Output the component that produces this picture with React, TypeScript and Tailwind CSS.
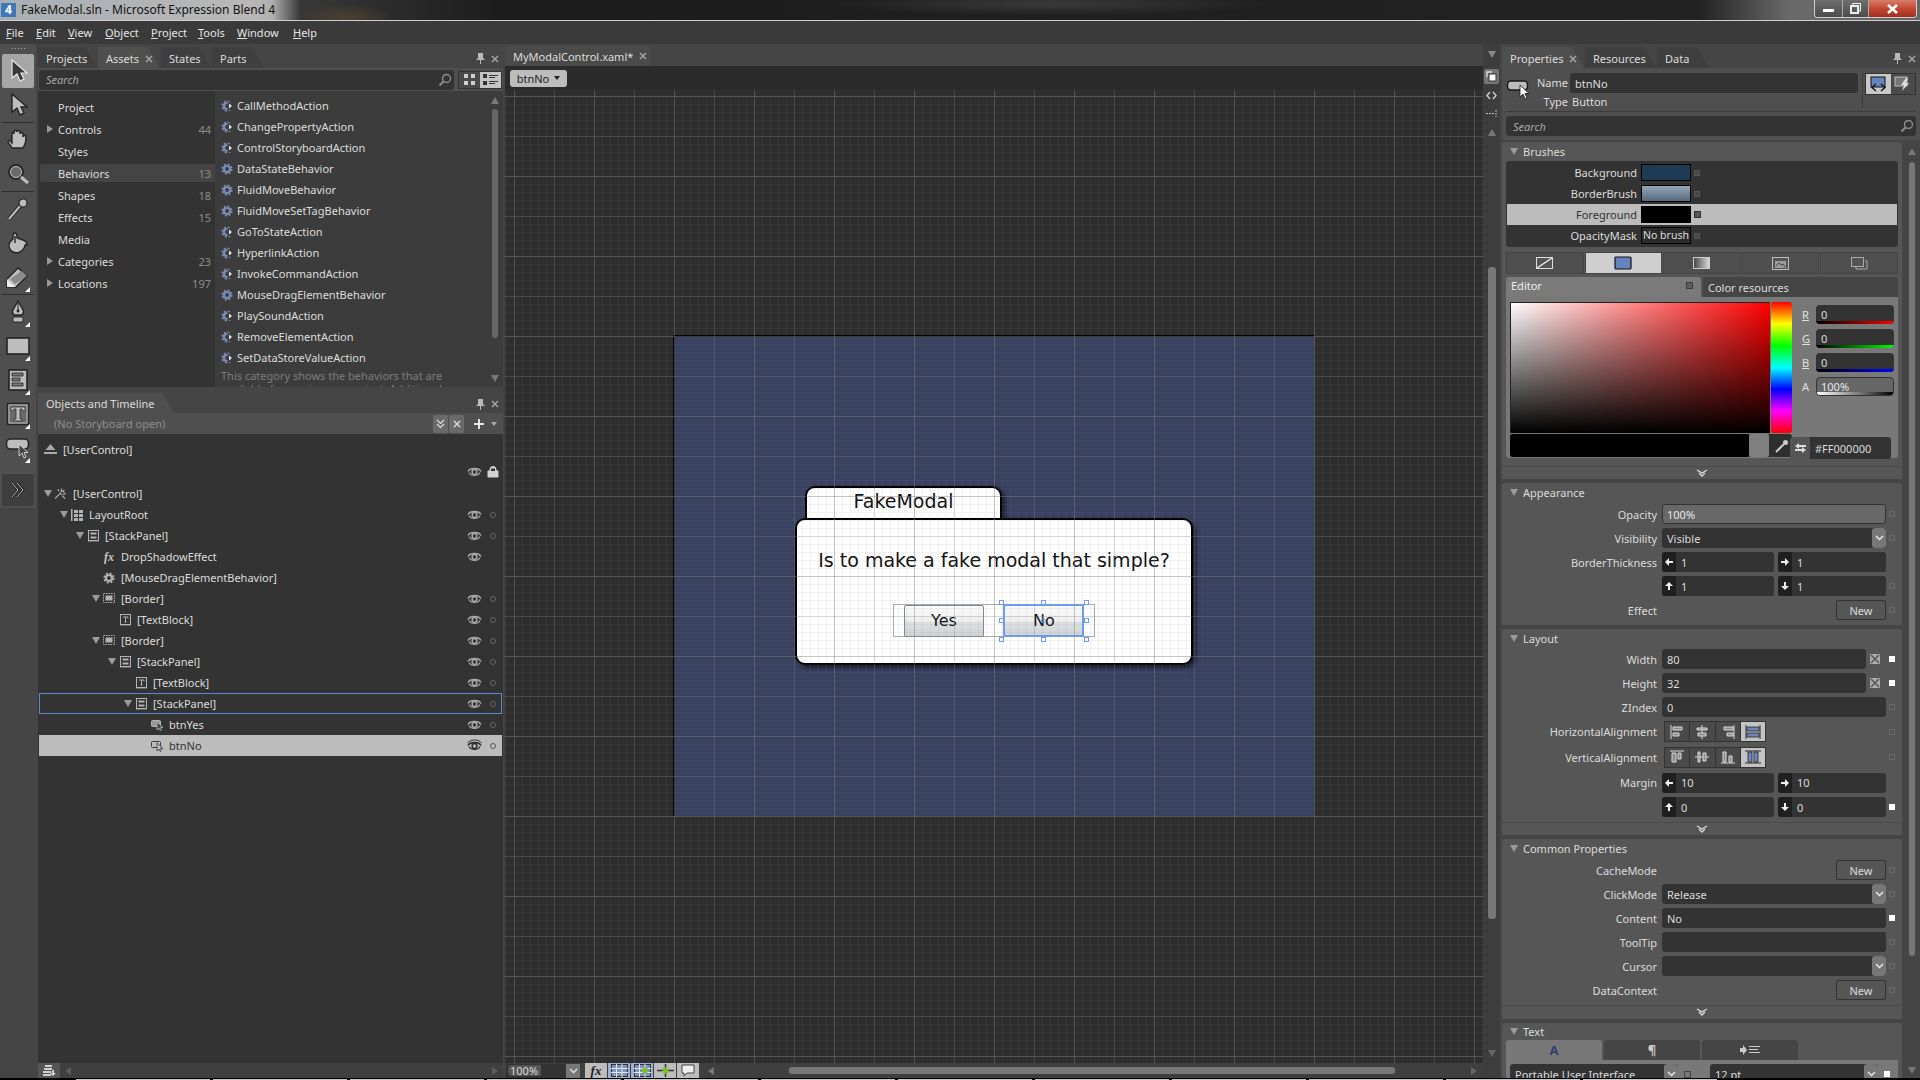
import type { ReactNode } from "react"

const menus: [string, string][] = [
  ["File", "w-[30px]"],
  ["Edit", "w-[32px]"],
  ["View", "w-[37px]"],
  ["Object", "w-[46px]"],
  ["Project", "w-[47px]"],
  ["Tools", "w-[39px]"],
  ["Window", "w-[56px]"],
  ["Help", "w-[40px]"],
]

const categories = [
  { name: "Project" },
  { name: "Controls", count: "44", arrow: true },
  { name: "Styles" },
  { name: "Behaviors", count: "13", active: true },
  { name: "Shapes", count: "18" },
  { name: "Effects", count: "15" },
  { name: "Media" },
  { name: "Categories", count: "23", arrow: true },
  { name: "Locations", count: "197", arrow: true },
]

const assets: [string, boolean][] = [
  ["CallMethodAction", true],
  ["ChangePropertyAction", true],
  ["ControlStoryboardAction", true],
  ["DataStateBehavior", false],
  ["FluidMoveBehavior", false],
  ["FluidMoveSetTagBehavior", false],
  ["GoToStateAction", true],
  ["HyperlinkAction", true],
  ["InvokeCommandAction", true],
  ["MouseDragElementBehavior", false],
  ["PlaySoundAction", true],
  ["RemoveElementAction", true],
  ["SetDataStoreValueAction", true],
]

type TreeIcon = "wand" | "grid" | "stack" | "fx" | "gear" | "border" | "text" | "button"

const tree: { depth: number; arrow?: boolean; icon: TreeIcon; label: string; eye?: boolean; dot?: boolean; outline?: boolean; selected?: boolean }[] = [
  { depth: 0, arrow: true, icon: "wand", label: "[UserControl]" },
  { depth: 1, arrow: true, icon: "grid", label: "LayoutRoot", eye: true, dot: true },
  { depth: 2, arrow: true, icon: "stack", label: "[StackPanel]", eye: true, dot: true },
  { depth: 3, icon: "fx", label: "DropShadowEffect", eye: true },
  { depth: 3, icon: "gear", label: "[MouseDragElementBehavior]" },
  { depth: 3, arrow: true, icon: "border", label: "[Border]", eye: true, dot: true },
  { depth: 4, icon: "text", label: "[TextBlock]", eye: true, dot: true },
  { depth: 3, arrow: true, icon: "border", label: "[Border]", eye: true, dot: true },
  { depth: 4, arrow: true, icon: "stack", label: "[StackPanel]", eye: true, dot: true },
  { depth: 5, icon: "text", label: "[TextBlock]", eye: true, dot: true },
  { depth: 5, arrow: true, icon: "stack", label: "[StackPanel]", eye: true, dot: true, outline: true },
  { depth: 6, icon: "button", label: "btnYes", eye: true, dot: true },
  { depth: 6, icon: "button", label: "btnNo", eye: true, dot: true, selected: true },
]

function DownArrow({ className = "border-t-[#9a9a9a]" }: { className?: string }) {
  return <span className={`block h-0 w-0 border-x-[4px] border-t-[7px] border-x-transparent ${className}`} />
}

function RightArrow() {
  return <span className="block h-0 w-0 border-y-[4px] border-l-[6px] border-y-transparent border-l-[#999]" />
}

function Close({ color = "#a8a8a8" }: { color?: string }) {
  return (
    <svg width="8" height="8" viewBox="0 0 8 8" className="shrink-0">
      <path d="M1 1l6 6M7 1L1 7" stroke={color} strokeWidth="1.4" />
    </svg>
  )
}

function Pin() {
  return (
    <svg width="9" height="11" viewBox="0 0 9 11" className="shrink-0">
      <path d="M2 0h5v5l2 2H0l2-2zM4 7h1v4H4z" fill="#b8b8b8" />
    </svg>
  )
}

function PinClose() {
  return (
    <div className="ml-auto flex items-center gap-[6px] pr-[4px] pt-[2px]">
      <Pin />
      <Close />
    </div>
  )
}

function Magnifier() {
  return (
    <svg width="14" height="14" viewBox="0 0 14 14" className="shrink-0">
      <circle cx="8.5" cy="5.5" r="4" fill="none" stroke="#8d8d8d" strokeWidth="1.4" />
      <path d="M5.5 8.5L1.5 12.5" stroke="#8d8d8d" strokeWidth="2" />
    </svg>
  )
}

function Eye({ strong = false }: { strong?: boolean }) {
  const c = strong ? "#2c2c2c" : "#a8a8a8"
  return (
    <svg width="15" height="13" viewBox="0 0 15 13" className="shrink-0">
      <path d="M1 6.5C3 2.5 12 2.5 14 6.5" fill="none" stroke={c} strokeWidth="1.6" />
      <path d="M2 7.5C4 11.5 11 11.5 13 7.5" fill="none" stroke={c} strokeWidth="1.2" />
      <circle cx="7.5" cy="7" r="2.4" fill="none" stroke={c} strokeWidth="1.5" />
      {strong && <path d="M0.5 4C3 0 12 0 14.5 4" fill="none" stroke={c} strokeWidth="1" />}
    </svg>
  )
}

function Gear({ action, color = "#7d8db8" }: { action: boolean; color?: string }) {
  return (
    <svg width="12" height="12" viewBox="0 0 12 12" className="shrink-0">
      <circle cx="6" cy="6" r="3" fill="none" stroke={color} strokeWidth="2.2" />
      <circle cx="6" cy="6" r="4.8" fill="none" stroke={color} strokeWidth="1.6" strokeDasharray="2 1.77" />
      {action && <rect x="6.5" y="2" width="5.5" height="8" fill="#3c3c3c" />}
      {action && <path d="M8 3.5l3 2.5-3 2.5z" fill="#e4e4e4" />}
    </svg>
  )
}

function TreeGlyph({ icon, dark }: { icon: TreeIcon; dark?: boolean }) {
  const c = dark ? "#3a3a3a" : "#b4b4b4"
  if (icon === "wand")
    return (
      <svg width="13" height="12" viewBox="0 0 13 12">
        <path d="M0 11l6-6M3 1l1.500 2M7 0v3M10 1.500L8.500 3.500M10 6H12M8 8l3 3" fill="none" stroke={c} strokeWidth="1.3" />
        <circle cx="8" cy="5" r="2" fill="none" stroke={c} />
      </svg>
    )
  if (icon === "grid")
    return (
      <svg width="12" height="12" viewBox="0 0 12 12" fill={c}>
        <path d="M0 0h1.5v12H0zM3 1h4v3H3zM8 1h4v3H8zM3 5h4v3H3zM8 5h4v3H8zM3 9h4v3H3zM8 9h4v3H8z" />
      </svg>
    )
  if (icon === "stack")
    return (
      <svg width="11" height="12" viewBox="0 0 11 12">
        <rect x="0.5" y="0.5" width="10" height="10" fill="none" stroke={c} />
        <rect x="2.5" y="2.5" width="6" height="2" fill={c} />
        <rect x="2.5" y="6.5" width="6" height="2" fill={c} />
        <rect x="0" y="11" width="11" height="1" fill="#666" />
      </svg>
    )
  if (icon === "fx")
    return (
      <span className="font-['Liberation_Serif',serif] text-[12px] font-bold italic leading-none text-[#c8c8c8]">fx</span>
    )
  if (icon === "gear") return <Gear action={false} color="#b4b4b4" />
  if (icon === "border")
    return (
      <svg width="12" height="11" viewBox="0 0 12 11">
        <rect x="0.5" y="0.5" width="11" height="9" fill="none" stroke={c} strokeDasharray="1.5 1" />
        <rect x="2.5" y="2.5" width="7" height="5" fill={c} />
      </svg>
    )
  if (icon === "text")
    return (
      <svg width="11" height="12" viewBox="0 0 11 12">
        <rect x="0.5" y="0.5" width="10" height="10" fill="none" stroke={c} />
        <path d="M3 3h5v1.4M5.5 3v5M4.5 8h2" fill="none" stroke={c} />
        <rect x="0" y="11" width="11" height="1" fill="#666" />
      </svg>
    )
  return (
    <svg width="12" height="12" viewBox="0 0 12 12">
      <rect x="0.5" y="1.5" width="9" height="6" rx="1" fill={dark ? "none" : "#999"} stroke={c} />
      <path d="M6 3v8l2-2 1.2 2.5 1.2-.6L9.4 8.4H12z" fill={dark ? "#c0c0c0" : "#444"} stroke={c} strokeWidth="0.8" />
    </svg>
  )
}

function ToolCorner() {
  return <span className="absolute bottom-[2px] right-[4px] h-0 w-0 border-b-[5px] border-l-[5px] border-b-white border-l-transparent" />
}

function Tool({ children, active, corner }: { children: ReactNode; active?: boolean; corner?: boolean }) {
  return (
    <div className={`relative mx-[2px] flex h-[34px] w-[32px] items-center justify-center rounded-[2px] ${active ? "bg-[#a6a6a6]" : ""}`}>
      {children}
      {corner && <ToolCorner />}
    </div>
  )
}

function Sep() {
  return <div className="mx-[2px] h-px w-[32px] shrink-0 bg-[#2e2e2e]" />
}

function Toolbar() {
  const s = "#242424"
  const f = "#bdbdbd"
  return (
    <div className="flex h-[464px] w-[36px] shrink-0 flex-col rounded-tr-[2px] bg-[#4f4f4f] pt-[2px]">
      <div className="mb-[3px] flex h-[5px] justify-center gap-[2px] pt-[2px]">
        {[0, 1, 2, 3, 4].map((n) => (
          <span key={n} className="h-px w-px bg-[#aaa]" />
        ))}
      </div>
      <Tool active>
        <svg width="22" height="26" viewBox="0 0 22 26">
          <path d="M5 2v18l5-4 3 7 4-2-3-6h6z" fill="#3a3a3a" stroke="#e8e8e8" strokeWidth="1.2" />
        </svg>
      </Tool>
      <Tool>
        <svg width="22" height="26" viewBox="0 0 22 26">
          <path d="M5 2v18l5-4 3 7 4-2-3-6h6z" fill={f} stroke={s} strokeWidth="1.4" />
        </svg>
      </Tool>
      <Sep />
      <Tool>
        <svg width="24" height="24" viewBox="0 0 24 24">
          <path d="M6 20c-2-3-4-5-4-7 1-1 2-1 3 1l1 1V6c0-2 2-2 2 0V4c0-2 3-2 3 0v0c0-2 3-2 3 0v2c0-2 3-2 3 0v3c0-2 3-2 3 0 0 4-1 8-3 11z" fill={f} stroke={s} strokeWidth="1.4" />
        </svg>
      </Tool>
      <Tool>
        <svg width="24" height="24" viewBox="0 0 24 24">
          <circle cx="10" cy="10" r="7" fill="#6a6a6a" stroke={s} strokeWidth="1.8" />
          <circle cx="10" cy="10" r="5.5" fill="none" stroke={f} strokeWidth="1" />
          <path d="M15 15l7 6" stroke={f} strokeWidth="3" />
        </svg>
      </Tool>
      <Sep />
      <Tool>
        <svg width="24" height="24" viewBox="0 0 24 24">
          <path d="M3 22l11-13" stroke={s} strokeWidth="4" />
          <path d="M3 22l11-13" stroke={f} strokeWidth="2" />
          <circle cx="17" cy="6" r="4" fill={f} stroke={s} strokeWidth="1.2" />
        </svg>
      </Tool>
      <Tool>
        <svg width="24" height="24" viewBox="0 0 24 24">
          <path d="M9 2c2 0 2 2 2 5l6 2c3 1 4 3 4 5-3-1-2 2-3 3-2 4-7 6-11 4-4-2-5-7-3-10l3-3V5c0-2 1-3 2-3z" fill={f} stroke={s} strokeWidth="1.4" />
          <path d="M9 5v7" stroke={s} strokeWidth="1.4" />
        </svg>
      </Tool>
      <Tool corner>
        <svg width="26" height="24" viewBox="0 0 26 24">
          <path d="M2 22v-8l11-11 9 8-11 11z" fill={f} stroke={s} strokeWidth="1.5" />
          <path d="M2 22v-8l5 5 4 3z" fill="#eee" />
          <path d="M5 14l5 5 12-8-5-5z" fill="#8a8a8a" />
        </svg>
      </Tool>
      <Sep />
      <Tool corner>
        <svg width="20" height="24" viewBox="0 0 20 24">
          <path d="M10 1l5 9c1 2 0 4-1 5H6c-1-1-2-3-1-5z" fill={f} stroke={s} strokeWidth="1.4" />
          <path d="M10 3v7" stroke={s} />
          <circle cx="10" cy="11" r="1.4" fill={s} />
          <rect x="5" y="17" width="10" height="5" rx="1" fill={f} stroke={s} />
        </svg>
      </Tool>
      <Tool corner>
        <svg width="26" height="22" viewBox="0 0 26 22">
          <rect x="2" y="3" width="22" height="16" fill={f} stroke={s} strokeWidth="1.6" />
        </svg>
      </Tool>
      <Tool corner>
        <svg width="22" height="24" viewBox="0 0 22 24">
          <rect x="2" y="2" width="18" height="20" fill={f} stroke={s} strokeWidth="1.6" />
          <path d="M5 5h11v3H5zM5 10h8v3H5zM5 15h11v3H5z" fill="#777" stroke={s} strokeWidth="0.8" />
        </svg>
      </Tool>
      <Tool corner>
        <svg width="24" height="24" viewBox="0 0 24 24">
          <rect x="1.5" y="1.5" width="21" height="21" fill="#6a6a6a" stroke={s} strokeWidth="1.4" />
          <rect x="3" y="3" width="18" height="18" fill="none" stroke={f} />
          <path d="M5 5h14v4h-2l-1-2h-2v10h2v2H8v-2h2V7H8L7 9H5z" fill={f} stroke={s} strokeWidth="0.7" />
        </svg>
      </Tool>
      <Tool corner>
        <svg width="26" height="24" viewBox="0 0 26 24">
          <rect x="1.5" y="3" width="22" height="10" rx="4" fill={f} stroke={s} strokeWidth="1.6" />
          <path d="M14 8v12l3-3 2 5 2-1-2-4.500h4z" fill="#444" stroke="#e8e8e8" strokeWidth="0.8" />
        </svg>
      </Tool>
      <div className="mx-[2px] mt-[9px] flex h-[32px] w-[32px] items-center justify-center rounded-[2px] bg-[#3e3e3e]">
        <svg width="16" height="16" viewBox="0 0 16 16">
          <path d="M2 1l6 7-6 7M7 1l6 7-6 7" fill="none" stroke="#181818" strokeWidth="2.4" />
          <path d="M2 1l6 7-6 7M7 1l6 7-6 7" fill="none" stroke="#c8c8c8" strokeWidth="1" />
        </svg>
      </div>
    </div>
  )
}

function Tab({ label, active, close, width, flat }: { label: string; active?: boolean; close?: boolean; width: string; flat?: boolean }) {
  return (
    <div
      className={`flex h-full items-center gap-[6px] pl-[8px] text-[#dcdcdc] [clip-path:polygon(0_0,calc(100%-12px)_0,100%_100%,0_100%)] ${flat ? "" : "pt-[2px]"} ${width} ${active ? "bg-[#4f4f4f]" : "bg-[#3f3f3f]"}`}
    >
      {label}
      {close && <Close />}
    </div>
  )
}

function SearchBox({ className }: { className: string }) {
  return (
    <div className={`flex h-[20px] items-center rounded-[3px] bg-[#333] pl-[7px] pr-[2px] italic text-[#a8a8a8] ${className}`}>
      Search
      <span className="ml-auto">
        <Magnifier />
      </span>
    </div>
  )
}

function LeftPanels() {
  return (
    <div className="flex w-[465px] shrink-0 flex-col pt-[3px]">
      <div className="flex h-[21px] items-stretch gap-px">
        <Tab label="Projects" width="w-[59px]" />
        <Tab label="Assets" active close width="w-[62px]" />
        <Tab label="States" width="w-[50px]" />
        <Tab label="Parts" width="w-[52px]" />
        <PinClose />
      </div>
      <div className="flex h-[23px] items-center gap-[4px] bg-[#4f4f4f] px-[1px]">
        <SearchBox className="w-[415px]" />
        <div className="flex h-[18px] w-[44px] border border-[#333]">
          <div className="flex flex-1 items-center justify-center bg-[#4a4a4a]">
            <svg width="11" height="11" viewBox="0 0 11 11" fill="#cfcfcf">
              <path d="M0 0h4v4H0zM7 0h4v4H7zM0 7h4v4H0zM7 7h4v4H7z" />
            </svg>
          </div>
          <div className="flex flex-1 items-center justify-center bg-[#c4c4c4]">
            <svg width="15" height="11" viewBox="0 0 15 11" fill="#333">
              <path d="M0 0h4v4H0zM6 1h9v1H6zM6 3h6v1H6zM0 7h4v4H0zM6 7h9v1H6zM6 9h6v1H6z" />
            </svg>
          </div>
        </div>
      </div>
      <div className="flex h-[296px] overflow-hidden">
        <div className="w-[177px] shrink-0 bg-[#333] pl-[2px] pt-[5px]">
          {categories.map((c) => (
            <div key={c.name} className="flex h-[22px] items-center">
              <div className={`flex h-[18px] w-full items-center rounded-l-[2px] pl-[7px] ${c.active ? "bg-[#444]" : ""}`}>
                <span className="w-[11px]">{c.arrow && <RightArrow />}</span>
                <span className="text-[#dcdcdc]">{c.name}</span>
                <span className="ml-auto pr-[4px] text-[#8e8e8e]">{c.count}</span>
              </div>
            </div>
          ))}
        </div>
        <div className="flex-1 bg-[#3c3c3c] pt-[4px]">
          {assets.map(([name, action]) => (
            <div key={name} className="flex h-[21px] items-center gap-[4px] pl-[6px] text-[#dcdcdc]">
              <Gear action={action} />
              {name}
            </div>
          ))}
          <div className="mt-[1px] pl-[6px] leading-[13px] text-[#7c7c7c]">
            This category shows the behaviors that are
            <br />
            available for use in your project. Additional
          </div>
        </div>
        <div className="flex w-[16px] shrink-0 flex-col items-center bg-[#3c3c3c] pt-[6px]">
          <span className="h-0 w-0 border-x-[4px] border-b-[7px] border-x-transparent border-b-[#7a7a7a]" />
          <div className="mt-[5px] h-[229px] w-[6px] shrink-0 rounded-[3px] bg-[#666]" />
          <span className="mt-[37px] h-0 w-0 border-x-[4px] border-t-[7px] border-x-transparent border-t-[#7a7a7a]" />
        </div>
      </div>
      <div className="h-[6px] shrink-0" />
      <div className="flex h-[20px] items-stretch">
        <Tab label="Objects and Timeline" width="w-[136px]" active flat />
        <PinClose />
      </div>
      <div className="flex h-[21px] items-center bg-[#4f4f4f] pl-[16px] pr-[6px]">
        <span className="text-[#8e8e8e]">(No Storyboard open)</span>
        <div className="ml-auto mr-[10px] flex h-[18px] gap-px">
          <div className="flex w-[15px] items-center justify-center rounded-[2px] bg-[#6a6a6a]">
            <svg width="9" height="10" viewBox="0 0 9 10">
              <path d="M1 1l3.500 3.500L8 1M1 5l3.500 3.500L8 5" fill="none" stroke="#e0e0e0" strokeWidth="1.2" />
            </svg>
          </div>
          <div className="flex w-[15px] items-center justify-center rounded-[2px] bg-[#6a6a6a]">
            <Close color="#e0e0e0" />
          </div>
        </div>
        <svg width="10" height="10" viewBox="0 0 10 10">
          <path d="M4 0h2v4h4v2H6v4H4V6H0V4h4z" fill="#e4e4e4" />
        </svg>
        <span className="ml-[7px]">
          <svg width="6" height="4" viewBox="0 0 6 4">
            <path d="M0 0h6L3 4z" fill="#aaa" />
          </svg>
        </span>
      </div>
      <div className="h-[629px] bg-[#333] pl-[1px] pr-[1px] pt-[5px]">
        <div className="flex h-[21px] items-center pl-[5px] text-[#dcdcdc]">
          <svg width="13" height="11" viewBox="0 0 13 11" className="mr-[6px]">
            <path d="M6.500 0l5 6h-10zM0 8h13v2H0z" fill="#aaa" />
          </svg>
          [UserControl]
        </div>
        <div className="flex h-[23px] items-center justify-end pr-[3px]">
          <Eye />
          <svg width="12" height="12" viewBox="0 0 12 12" className="ml-[5px]">
            <path d="M3 5V3.500a3 3 0 016 0V5M1 5h10v6H1z" fill="#d4d4d4" stroke="#d4d4d4" />
            <rect x="4" y="2.500" width="4" height="2.500" fill="#333" />
          </svg>
        </div>
        {tree.map((r, i) => (
          <div
            key={i}
            className={`flex h-[21px] items-center border ${r.outline ? "border-[#5f86d0]" : "border-transparent"} ${r.selected ? "bg-[#bcbcbc] text-[#333]" : "text-[#dcdcdc]"}`}
            style={{ paddingLeft: 4 + r.depth * 16 }}
          >
            <span className="mr-[3px] w-[8px]">{r.arrow && <DownArrow />}</span>
            <span className="mr-[6px] flex w-[12px] justify-center">
              <TreeGlyph icon={r.icon} dark={r.selected} />
            </span>
            {r.label}
            <span className="ml-auto mr-[7px] flex w-[15px]">{r.eye && <Eye strong={r.selected} />}</span>
            <span className="mr-[5px] flex w-[7px] justify-center">
              {r.dot && <span className={`h-[6px] w-[6px] rounded-full border ${r.selected ? "border-[#555]" : "border-[#666]"}`} />}
            </span>
          </div>
        ))}
      </div>
      <div className="flex h-[15px] items-center bg-[#3f3f3f] pr-[5px]">
        <div className="flex h-[15px] w-[22px] items-center justify-center bg-[#555]">
          <svg width="14" height="11" viewBox="0 0 14 11" fill="#d0d0d0">
            <path d="M3 0h7v2H3zM2 3h8v2H2zM1 6h8v2H1zM1 9h8v2H1zM10 5h2v3h2l-3 3-3-3h2z" />
          </svg>
        </div>
        <span className="ml-[5px] h-0 w-0 border-y-[4px] border-r-[6px] border-y-transparent border-r-[#5e5e5e]" />
        <span className="ml-auto h-0 w-0 border-y-[4px] border-l-[6px] border-y-transparent border-l-[#5e5e5e]" />
      </div>
    </div>
  )
}

function GridOverlay() {
  return (
    <div className="pointer-events-none absolute inset-0 [background-image:linear-gradient(90deg,rgba(128,128,128,.2)_1px,transparent_1px),linear-gradient(rgba(128,128,128,.2)_1px,transparent_1px),linear-gradient(90deg,rgba(128,128,128,.24)_1px,transparent_1px),linear-gradient(rgba(128,128,128,.24)_1px,transparent_1px),linear-gradient(90deg,rgba(128,128,128,.1)_1px,transparent_1px),linear-gradient(rgba(128,128,128,.1)_1px,transparent_1px)] [background-position:9px_6px,9px_6px,9px_6px,9px_6px,1px_6px,1px_6px] [background-size:80px_80px,80px_80px,40px_40px,40px_40px,8px_8px,8px_8px]" />
  )
}

function Handle({ className }: { className: string }) {
  return <span className={`absolute h-[5px] w-[5px] border border-[#6f9bef] bg-white/20 ${className}`} />
}

function ModalButton({ label }: { label: string }) {
  return (
    <div className="flex h-[32px] w-[80px] items-center justify-center rounded-[2px] border border-[#7d8a96] bg-[linear-gradient(#fbfbfb,#f0f0f0_50%,#dde0e2_55%,#cfd3d6)] font-['DejaVu_Sans',sans-serif] text-[16px] text-[#111]">
      {label}
    </div>
  )
}

function Center() {
  return (
    <div className="flex w-[978px] shrink-0 flex-col pt-[2px]">
      <div className="flex h-[20px] items-stretch">
        <div className="flex w-[146px] items-center gap-[6px] rounded-t-[3px] bg-[#4a4a4a] pl-[8px] text-[#dcdcdc]">
          MyModalControl.xaml*
          <Close />
        </div>
      </div>
      <div className="flex h-[24px] items-center bg-[#2b2b2b] pl-[5px]">
        <div className="flex h-[17px] w-[57px] items-center justify-center gap-[5px] rounded-[3px] bg-[#bdbdbd] text-[#222]">
          btnNo
          <svg width="6" height="4" viewBox="0 0 6 4">
            <path d="M0 0h6L3 4z" fill="#222" />
          </svg>
        </div>
      </div>
      <div className="relative h-[973px] overflow-hidden bg-[#2e2e2e]">
        <div className="absolute left-[168px] top-[245px] box-border h-[481px] w-[641px] border-l-2 border-t-2 border-black bg-[#3a4261]">
          <div className="absolute left-[130px] top-[149px] flex h-[34px] w-[197px] items-center justify-center rounded-t-[10px] border-2 border-b-0 border-black bg-white pb-[6px] font-['DejaVu_Sans',sans-serif] text-[19px] text-[#111] shadow-[3px_2px_4px_rgba(0,0,0,.55)]">
            FakeModal
          </div>
          <div className="absolute left-[120px] top-[181px] box-border flex h-[147px] w-[398px] flex-col items-center rounded-[10px] border-2 border-black bg-white shadow-[3px_3px_4px_rgba(0,0,0,.55)]">
            <div className="mt-[31px] font-['DejaVu_Sans',sans-serif] text-[19px] whitespace-nowrap text-[#111]">
              Is to make a fake modal that simple?
            </div>
            <div className="mt-[34px] flex h-[33px] w-[202px] items-center justify-center gap-[20px] border border-[#aaa]">
              <ModalButton label="Yes" />
              <ModalButton label="No" />
            </div>
          </div>
        </div>
        <GridOverlay />
        <div className="absolute left-[498px] top-[514px] box-border h-[33px] w-[81px] border-2 border-[#6f9bef]">
          <Handle className="-left-[6px] -top-[6px]" />
          <Handle className="left-[36px] -top-[6px]" />
          <Handle className="-right-[7px] -top-[6px]" />
          <Handle className="-left-[6px] top-[12px]" />
          <Handle className="-right-[7px] top-[12px]" />
          <Handle className="-left-[6px] -bottom-[7px]" />
          <Handle className="left-[36px] -bottom-[7px]" />
          <Handle className="-right-[7px] -bottom-[7px]" />
          <span className="absolute left-[36px] top-[12px] h-[5px] w-[5px] rounded-full border border-[#6f9bef]" />
        </div>
      </div>
      <div className="flex h-[15px] items-center bg-[#3f3f3f] pl-[1px]">
        <div className="flex h-[14px] w-[60px] items-center bg-[#333] pl-[2px]">
          <span className="rounded-l-[4px] bg-[#555] pl-[2px] pr-[3px] text-[#dcdcdc]">100%</span>
        </div>
        <div className="flex h-[14px] w-[14px] items-center justify-center bg-[#777]">
          <svg width="9" height="6" viewBox="0 0 9 6">
            <path d="M1 1l3.500 3.500L8 1" fill="none" stroke="#e4e4e4" strokeWidth="1.4" />
          </svg>
        </div>
        <div className="ml-[5px] flex h-[15px] w-[114px] gap-px">
          <div className="flex flex-1 items-center justify-center bg-[#bdbdbd] font-['Liberation_Serif',serif] text-[13px] font-bold italic text-[#222]">fx</div>
          {[0, 1, 2, 3].map((n) => (
            <div key={n} className={`flex flex-1 items-center justify-center ${n < 2 ? "bg-[#9fb1d2]" : "bg-[#bdbdbd]"}`}>
              {n < 2 && (
                <svg width="17" height="13" viewBox="0 0 17 13">
                  <rect x="0.500" y="0.500" width="16" height="12" fill="#7d92bd" stroke="#333" />
                  <path d="M5.500 0v13M11 0v13M0 4.500h17M0 8.500h17" stroke="#e4e4e4" strokeWidth="1" />
                  {n === 1 && <circle cx="11" cy="6.500" r="3" fill="#7bc02c" />}
                </svg>
              )}
              {n === 2 && (
                <svg width="17" height="13" viewBox="0 0 17 13">
                  <path d="M0 6.500h17M8.500 0v13" stroke="#333" strokeWidth="1.500" />
                  <circle cx="8.500" cy="6.500" r="3.200" fill="#7bc02c" />
                </svg>
              )}
              {n === 3 && (
                <svg width="14" height="13" viewBox="0 0 14 13">
                  <path d="M1 1h12v8H6l-3 3V9H1z" fill="#eee" stroke="#444" />
                </svg>
              )}
            </div>
          ))}
        </div>
        <span className="ml-[9px] h-0 w-0 border-y-[4px] border-r-[6px] border-y-transparent border-r-[#777]" />
        <div className="ml-[75px] h-[7px] w-[606px] rounded-[3px] bg-[#777]" />
        <span className="ml-auto mr-[6px] h-0 w-0 border-y-[4px] border-l-[6px] border-y-transparent border-l-[#666]" />
      </div>
    </div>
  )
}

function Strip() {
  return (
    <div className="flex w-[17px] shrink-0 flex-col items-center bg-[#3d3d3d] pt-[7px]">
      <DownArrow className="border-t-[#888]" />
      <div className="mt-[11px] flex h-[15px] w-[15px] items-center justify-center rounded-[2px] bg-[#777]">
        <svg width="11" height="11" viewBox="0 0 11 11">
          <rect x="3" y="3" width="7" height="7" fill="#fff" stroke="#333" />
          <path d="M1 6V1h5" fill="none" stroke="#ddd" strokeWidth="1.300" />
        </svg>
      </div>
      <svg width="11" height="9" viewBox="0 0 11 9" className="mt-[7px]">
        <path d="M4 1L1 4.500 4 8M7 1l3 3.500L7 8" fill="none" stroke="#d0d0d0" strokeWidth="1.400" />
      </svg>
      <svg width="11" height="9" viewBox="0 0 11 9" className="mt-[9px]">
        <path d="M0 4.500h8M10 1v7" stroke="#bcbcbc" strokeDasharray="2 1" />
      </svg>
      <span className="mt-[11px] h-0 w-0 border-x-[4px] border-b-[7px] border-x-transparent border-b-[#777]" />
      <div className="mt-[131px] h-[652px] w-[8px] shrink-0 rounded-[3px] bg-[#777]" />
      <span className="mt-[131px] h-0 w-0 border-x-[4px] border-t-[7px] border-x-transparent border-t-[#666]" />
    </div>
  )
}

function Marker({ set }: { set?: boolean }) {
  return <span className={`block h-[6px] w-[6px] border ${set ? "border-white bg-white" : "border-[#6a6a6a]"}`} />
}

function Section({ title, children, chevron, className = "", head = "h-[19px]" }: { title: string; children: ReactNode; chevron?: boolean; className?: string; head?: string }) {
  return (
    <div className={`shrink-0 rounded-t-[3px] bg-[#565656] ${className}`}>
      <div className={`flex items-center pl-[8px] text-[#dcdcdc] ${head}`}>
        <span className="mr-[5px]">
          <DownArrow />
        </span>
        {title}
      </div>
      {children}
      {chevron && <Chevron />}
    </div>
  )
}

function Chevron() {
  return (
    <div className="mt-[3px] flex h-[13px] items-center justify-center border-t border-[#4a4a4a]">
      <svg width="12" height="8" viewBox="0 0 12 8">
        <path d="M1 1l5 3 5-3M3 4l3 3 3-3" fill="none" stroke="#dcdcdc" strokeWidth="1.300" />
      </svg>
    </div>
  )
}

function Row({ label, children, marker = true, set, h = "h-[24px]" }: { label?: string; children?: ReactNode; marker?: boolean; set?: boolean; h?: string }) {
  return (
    <div className={`flex items-center ${h}`}>
      <span className="w-[155px] shrink-0 text-right text-[#dcdcdc]">{label}</span>
      <div className="ml-[5px] flex w-[224px] shrink-0 items-center">{children}</div>
      {marker && (
        <span className="ml-[3px]">
          <Marker set={set} />
        </span>
      )}
    </div>
  )
}

function Field({ children, className = "w-full" }: { children?: ReactNode; className?: string }) {
  return <div className={`flex h-[20px] items-center rounded-[3px] bg-[#333] pl-[5px] text-[#dcdcdc] ${className}`}>{children}</div>
}

function Combo({ value }: { value?: string }) {
  return (
    <div className="flex h-[20px] w-full items-center overflow-hidden rounded-[3px] bg-[#333] pl-[5px] text-[#dcdcdc]">
      {value}
      <span className="ml-auto flex h-full w-[14px] items-center justify-center rounded-[3px] bg-[#777]">
        <svg width="9" height="6" viewBox="0 0 9 6">
          <path d="M1 1l3.500 3.500L8 1" fill="none" stroke="#e8e8e8" strokeWidth="1.500" />
        </svg>
      </span>
    </div>
  )
}

function NewButton() {
  return <div className="ml-auto flex h-[20px] w-[50px] items-center justify-center rounded-[2px] border border-[#333] text-[#dcdcdc]">New</div>
}

function SideField({ dir, value, w = "w-[112px]" }: { dir: "l" | "r" | "u" | "d"; value: string; w?: string }) {
  const arrows = {
    l: "M1 5l4-4v3h4v2H5v3z",
    r: "M9 5L5 1v3H1v2h4v3z",
    u: "M5 1L1 5h3v4h2V5h3z",
    d: "M5 9l4-4H6V1H4v4H1z",
  }
  return (
    <div className={`flex h-[20px] items-center overflow-hidden rounded-[3px] bg-[#333] text-[#dcdcdc] ${w}`}>
      <span className="flex h-full w-[14px] items-center justify-center bg-[#1f1f1f]">
        <svg width="10" height="10" viewBox="0 0 10 10">
          <path d={arrows[dir]} fill="#eee" />
        </svg>
      </span>
      <span className="pl-[5px]">{value}</span>
    </div>
  )
}

function SidePair({ a, b, c, d }: { a: "l" | "u"; b: "r" | "d"; c: string; d: string }) {
  return (
    <div className="flex gap-[4px]">
      <SideField dir={a} value={c} />
      <SideField dir={b} value={d} w="w-[108px]" />
    </div>
  )
}

function Resize() {
  return (
    <span className="ml-[4px] flex h-[10px] w-[10px] bg-[#aaa]">
      <svg width="10" height="10" viewBox="0 0 10 10">
        <path d="M1 1l8 8M9 1L1 9" stroke="#555" strokeWidth="1.500" />
      </svg>
    </span>
  )
}

function AlignGroup({ vertical }: { vertical?: boolean }) {
  const h = [
    "M1 0v14M3 2h9v3H3zM3 8h6v3H3z",
    "M7 0v3M7 5v3M7 11v3M2 3h10v2H2zM3 8h8v3H3z",
    "M13 0v14M3 2h9v3H3zM6 8h6v3H6z",
  ]
  const v = [
    "M0 1h14M2 3h4v9H2zM8 3h3v6H8z",
    "M0 7h3M5 7h3M11 7h3M3 2h2v10H3zM8 3h3v8H8z",
    "M0 13h14M2 2h3v10H2zM8 6h3v6H8z",
  ]
  const items = vertical ? v : h
  return (
    <div className="ml-[2px] flex h-[21px] w-[102px] border border-[#333] bg-[#4a4a4a]">
      {items.map((d) => (
        <div key={d} className="flex flex-1 items-center justify-center border-r border-[#333]">
          <svg width="14" height="14" viewBox="0 0 14 14">
            <path d={d} fill="#8a8a8a" stroke="#dadada" strokeWidth="1" />
          </svg>
        </div>
      ))}
      <div className="flex flex-1 items-center justify-center bg-[#c4c4c4]">
        <svg width="16" height="14" viewBox="0 0 16 14">
          {vertical ? (
            <>
              <path d="M0 1h16M0 13h16" stroke="#222" />
              <path d="M3 2h4v10H3zM9 2h4v10H9z" fill="#6f87bd" stroke="#222" strokeWidth="0.800" />
            </>
          ) : (
            <>
              <path d="M1 0v14M15 0v14" stroke="#222" />
              <path d="M2 2h12v4H2zM2 8h12v4H2z" fill="#6f87bd" stroke="#222" strokeWidth="0.800" />
            </>
          )}
        </svg>
      </div>
    </div>
  )
}

function BrushRow({ label, swatch, active, children }: { label: string; swatch: string; active?: boolean; children?: ReactNode }) {
  return (
    <div className={`flex h-[21px] items-center ${active ? "bg-[#bcbcbc] text-[#333]" : "text-[#dcdcdc]"}`}>
      <span className="w-[130px] shrink-0 text-right">{label}</span>
      <div className={`ml-[4px] flex h-[17px] w-[50px] items-center justify-center overflow-hidden whitespace-nowrap border border-black text-[10.5px] text-[#dcdcdc] ${swatch}`}>{children}</div>
      <span className="ml-[3px]">
        <span className={`block border ${active ? "h-[7px] w-[7px] border-[#333] bg-[#555]" : "h-[6px] w-[6px] border-[#555] bg-[#484848]"}`} />
      </span>
    </div>
  )
}

function ColorField({ label, bar }: { label: string; bar: string }) {
  return (
    <div className="flex h-[24px] items-center">
      <span className="w-[20px] pl-[6px] text-[#e0e0e0] underline">{label}</span>
      <div className="relative flex h-[19px] w-[78px] items-center overflow-hidden rounded-[4px] bg-[#333] pl-[5px] text-[#dcdcdc]">
        0
        <span className={`absolute inset-x-0 bottom-0 h-[3px] ${bar}`} />
      </div>
    </div>
  )
}

function BrushTabIcon({ n }: { n: number }) {
  if (n === 0)
    return (
      <svg width="17" height="12" viewBox="0 0 17 12">
        <rect x="0.500" y="0.500" width="16" height="11" fill="#555" stroke="#ddd" />
        <path d="M1 11L16 1" stroke="#eee" strokeWidth="1.500" />
      </svg>
    )
  if (n === 1)
    return (
      <svg width="18" height="14" viewBox="0 0 18 14">
        <rect x="1" y="1" width="16" height="12" rx="1" fill="#6584bd" stroke="#111" strokeWidth="1.200" />
      </svg>
    )
  if (n === 2)
    return (
      <svg width="17" height="12" viewBox="0 0 17 12">
        <defs>
          <linearGradient id="bt" x1="0" x2="1">
            <stop offset="0" stopColor="#444" />
            <stop offset="1" stopColor="#ddd" />
          </linearGradient>
        </defs>
        <rect x="0.500" y="0.500" width="16" height="11" fill="url(#bt)" stroke="#ccc" />
      </svg>
    )
  if (n === 3)
    return (
      <svg width="17" height="13" viewBox="0 0 17 13">
        <rect x="0.500" y="0.500" width="16" height="12" fill="#555" stroke="#bbb" />
        <rect x="3" y="4" width="11" height="7" fill="#999" />
        <path d="M4 9l3-3 2 2 2-1 2 3" stroke="#444" fill="none" />
      </svg>
    )
  return (
    <svg width="17" height="13" viewBox="0 0 17 13">
      <rect x="0.500" y="0.500" width="12" height="9" fill="#555" stroke="#aaa" />
      <path d="M14 4h2v8H5v-2" fill="none" stroke="#aaa" />
    </svg>
  )
}

function Properties() {
  return (
    <div className="flex w-[420px] shrink-0 flex-col pl-[2px] pt-[3px]">
      <div className="flex h-[21px] shrink-0 items-stretch gap-px">
        <Tab label="Properties" active close width="w-[82px]" />
        <Tab label="Resources" width="w-[71px]" />
        <Tab label="Data" width="w-[52px]" />
        <PinClose />
      </div>
      <div className="h-[72px] shrink-0 rounded-b-[3px] bg-[#4f4f4f] px-[4px] pt-[5px]">
        <div className="flex h-[39px] border-b border-[#3c3c3c]">
          <svg width="24" height="26" viewBox="0 0 24 26" className="mt-[5px] shrink-0">
            <rect x="1.500" y="3" width="20" height="9" rx="3.500" fill="#bdbdbd" stroke="#181818" strokeWidth="1.500" />
            <path d="M14 7v12l3-3 2 5 2-1-2-4.500h4z" fill="#fff" stroke="#222" strokeWidth="0.900" />
          </svg>
          <div className="w-[38px] shrink-0 text-right leading-[19px] text-[#dcdcdc]">
            Name
            <div>Type</div>
          </div>
          <div className="ml-[2px] w-[288px]">
            <div className="flex h-[20px] items-center rounded-[3px] bg-[#333] pl-[5px] text-[#dcdcdc]">btnNo</div>
            <div className="pl-[2px] leading-[17px] text-[#dcdcdc]">Button</div>
          </div>
          <div className="ml-[4px] h-[35px] border-l border-[#3c3c3c]" />
          <div className="ml-[2px] flex h-[22px] w-[51px] border border-[#333]">
            <div className="flex flex-1 items-center justify-center bg-[#c8c8c8]">
              <svg width="17" height="16" viewBox="0 0 17 16">
                <rect x="1" y="1" width="14" height="10" fill="#6584bd" stroke="#111" />
                <path d="M6 8l-4 3.500L6 15M11 8l4 3.500L11 15" fill="none" stroke="#111" strokeWidth="1.400" />
              </svg>
            </div>
            <div className="flex flex-1 items-center justify-center bg-[#4a4a4a]">
              <svg width="17" height="16" viewBox="0 0 17 16">
                <rect x="1" y="1" width="12" height="9" fill="#777" stroke="#bbb" />
                <path d="M12 2l-5 7h3l-2 6 7-8h-3l2-5z" fill="#ddd" />
              </svg>
            </div>
          </div>
        </div>
        <div className="mt-[4px]">
          <SearchBox className="w-[410px]" />
        </div>
      </div>
      <div className="mt-[2px] flex min-h-0 flex-1 overflow-hidden">
        <div className="flex w-[400px] shrink-0 flex-col gap-[4px] overflow-hidden">
          <Section title="Brushes" className="h-[337px]" head="h-[19px]">
            <div className="mx-[4px] rounded-[3px] bg-[#333] py-[1px] pl-[1px] pr-[1px]">
              <BrushRow label="Background" swatch="bg-[#1f3a54]" />
              <BrushRow label="BorderBrush" swatch="bg-[linear-gradient(#95a7b8,#55697c)]" />
              <BrushRow label="Foreground" swatch="bg-black" active />
              <BrushRow label="OpacityMask" swatch="bg-[#2b2b2b]">
                No brush
              </BrushRow>
            </div>
            <div className="mx-[4px] mt-[5px] flex h-[22px] gap-px">
              {[0, 1, 2, 3, 4].map((n) => (
                <div key={n} className={`flex flex-1 items-center justify-center border border-[#444] ${n === 1 ? "bg-[#cfcfcf]" : "bg-[#4f4f4f]"}`}>
                  <BrushTabIcon n={n} />
                </div>
              ))}
            </div>
            <div className="mx-[4px] mt-[3px] flex h-[20px] gap-[2px]">
              <div className="flex w-[195px] items-center justify-between rounded-t-[3px] bg-[#7a7a7a] px-[5px] pb-[3px] text-[#eee]">
                Editor
                <span className="mr-[3px] block h-[7px] w-[7px] border border-[#3a3a3a] bg-[#5d5d5d]" />
              </div>
              <div className="flex flex-1 items-center rounded-t-[3px] bg-[#454545] pl-[5px] text-[#dcdcdc]">Color resources</div>
            </div>
            <div className="mx-[4px] mb-[8px] h-[161px] rounded-b-[3px] bg-[#787878]">
              <div className="flex pl-[4px] pt-[5px]">
                <div className="w-[282px] shrink-0">
                  <div className="flex h-[131px]">
                    <div className="h-full w-[260px] border-l border-t border-[#222] bg-[linear-gradient(to_top,#000,transparent),linear-gradient(to_right,#fff,#f00)]" />
                    <div className="ml-[1px] h-full w-[21px] rounded-[3px] bg-[linear-gradient(#f00,#ff0,#0f0,#0ff,#00f,#f0f,#f00)]" />
                  </div>
                  <div className="mt-[1px] flex h-[23px] rounded-[3px] bg-[#2e2e2e]">
                    <div className="w-[239px] rounded-[3px] bg-black" />
                    <div className="w-[20px] rounded-[2px] bg-[#808080]" />
                    <div className="ml-[2px] flex w-[21px] items-center justify-center">
                      <svg width="14" height="14" viewBox="0 0 14 14">
                        <path d="M1 13l8-8" stroke="#ccc" strokeWidth="2" />
                        <circle cx="10.500" cy="3.500" r="2.500" fill="#ccc" />
                      </svg>
                    </div>
                  </div>
                </div>
                <div className="ml-[4px] flex-1">
                  <ColorField label="R" bar="bg-[linear-gradient(90deg,#000,#f00)]" />
                  <ColorField label="G" bar="bg-[linear-gradient(90deg,#000,#0f0)]" />
                  <ColorField label="B" bar="bg-[linear-gradient(90deg,#000,#00f)]" />
                  <div className="flex h-[24px] items-center">
                    <span className="w-[20px] pl-[6px] text-[#e0e0e0]">A</span>
                    <div className="relative flex h-[19px] w-[78px] items-center overflow-hidden rounded-[4px] border border-[#333] bg-[#666] pl-[4px] text-[#e8e8e8]">
                      100%
                      <span className="absolute inset-x-0 bottom-0 h-[3px] bg-[linear-gradient(90deg,#fff,#888,#000)]" />
                    </div>
                  </div>
                  <div className="ml-[-6px] mt-[39px] flex h-[22px] w-[101px] items-center rounded-[3px] bg-[#333] text-[#dcdcdc]">
                    <span className="mr-[5px] flex h-full w-[20px] items-center justify-center rounded-l-[3px] bg-[#555]">
                      <svg width="13" height="12" viewBox="0 0 13 12" fill="#ddd">
                        <path d="M1 4l4-3v2h7v2H5v2zM12 8L8 5v2H1v2h7v2z" />
                      </svg>
                    </span>
                    #FF000000
                  </div>
                </div>
              </div>
            </div>
            <Chevron />
          </Section>
          <Section title="Appearance" className="h-[142px]">
            <Row label="Opacity">
              <div className="flex h-[20px] w-full items-center rounded-[3px] border border-[#333] bg-[#686868] pl-[4px] text-[#e8e8e8]">100%</div>
            </Row>
            <Row label="Visibility">
              <Combo value="Visible" />
            </Row>
            <Row label="BorderThickness" marker={false}>
              <SidePair a="l" b="r" c="1" d="1" />
            </Row>
            <Row>
              <SidePair a="u" b="d" c="1" d="1" />
            </Row>
            <Row label="Effect">
              <NewButton />
            </Row>
          </Section>
          <Section title="Layout" className="h-[206px]" head="h-[18px]">
            <Row label="Width" set>
              <Field className="w-[204px]">80</Field>
              <Resize />
            </Row>
            <Row label="Height" set>
              <Field className="w-[204px]">32</Field>
              <Resize />
            </Row>
            <Row label="ZIndex">
              <Field>0</Field>
            </Row>
            <Row label="HorizontalAlignment" h="h-[25px]">
              <AlignGroup />
            </Row>
            <Row label="VerticalAlignment" h="h-[26px]">
              <AlignGroup vertical />
            </Row>
            <Row label="Margin" marker={false} h="h-[25px]">
              <SidePair a="l" b="r" c="10" d="10" />
            </Row>
            <Row set>
              <SidePair a="u" b="d" c="0" d="0" />
            </Row>
            <Chevron />
          </Section>
          <Section title="Common Properties" className="h-[180px]">
            <Row label="CacheMode">
              <NewButton />
            </Row>
            <Row label="ClickMode">
              <Combo value="Release" />
            </Row>
            <Row label="Content" set>
              <Field>No</Field>
            </Row>
            <Row label="ToolTip">
              <Field />
            </Row>
            <Row label="Cursor">
              <Combo />
            </Row>
            <Row label="DataContext">
              <NewButton />
            </Row>
            <Chevron />
          </Section>
          <Section title="Text" head="h-[17px]">
            <div className="mx-[4px] flex h-[20px] gap-[2px]">
              <div className="flex w-[96px] items-center justify-center rounded-t-[3px] bg-[#787878] text-[13px] font-bold text-[#2c4070]">A</div>
              <div className="flex w-[96px] items-center justify-center rounded-t-[3px] bg-[#454545] text-[13px] font-bold text-[#ccc]">¶</div>
              <div className="flex w-[96px] items-center justify-center rounded-t-[3px] bg-[#454545]">
                <svg width="20" height="10" viewBox="0 0 20 10" fill="#ccc">
                  <path d="M0 3h3V0l4 5-4 5V7H0zM9 1h11v1H9zM9 4h9v1H9zM9 7h11v1H9z" />
                </svg>
              </div>
            </div>
            <div className="mx-[4px] h-[60px] bg-[#787878] pl-[4px] pt-[4px]">
              <div className="flex items-center">
                <div className="w-[168px]">
                  <Combo value="Portable User Interface" />
                </div>
                <span className="ml-[6px] block h-[7px] w-[7px] border border-[#444]" />
                <div className="ml-[19px] w-[168px]">
                  <Combo value="12 pt" />
                </div>
                <span className="ml-[6px]">
                  <Marker set />
                </span>
              </div>
            </div>
          </Section>
        </div>
        <div className="flex w-[18px] shrink-0 flex-col items-center pl-[2px] pt-[6px]">
          <span className="h-0 w-0 border-x-[4px] border-b-[7px] border-x-transparent border-b-[#777]" />
          <div className="mt-[7px] h-[794px] w-[6px] shrink-0 rounded-[3px] bg-[#777]" />
          <span className="mt-[111px] h-0 w-0 border-x-[4px] border-t-[7px] border-x-transparent border-t-[#777]" />
        </div>
      </div>
    </div>
  )
}

export default function App() {
  return (
    <div className="flex h-[1080px] w-[1920px] flex-col overflow-hidden bg-[#3d3d3d] font-['Noto_Sans',sans-serif] text-[11px] leading-none">
      <div className="flex h-[20px] shrink-0 items-center bg-[radial-gradient(ellipse_50px_14px_at_345px_18px,#4a4030,transparent),radial-gradient(ellipse_220px_12px_at_1050px_4px,#3a3a3a,transparent),linear-gradient(90deg,#a8aeb4_0,#b8b8b8_250px,#b0b0b0_272px,#383838_300px,#1c1c1c_500px,#222_1700px,#6a6a6a_1790px,#666_1920px)] pl-[1px]">
        <div className="flex h-[14px] w-[15px] items-center justify-center bg-[#3f78b8] text-[12px] font-bold text-white">4</div>
        <span className="ml-[5px] text-[12px] text-[#141414]">FakeModal.sln - Microsoft Expression Blend 4</span>
        <div className="ml-auto mr-[3px] flex h-[18px] w-[103px] self-start overflow-hidden rounded-b-[4px] border-x border-b border-[#d0d0d0]">
          <div className="flex w-[28px] items-center justify-center border-r border-[#aaa] bg-[linear-gradient(#6e6e6e,#4c4c4c)]">
            <span className="mt-[4px] h-[3px] w-[11px] bg-white" />
          </div>
          <div className="flex w-[26px] items-center justify-center border-r border-[#aaa] bg-[linear-gradient(#6e6e6e,#4c4c4c)]">
            <svg width="11" height="11" viewBox="0 0 11 11">
              <path d="M3 3V0.500h7.500V8H8" fill="none" stroke="#eee" strokeWidth="1.200" />
              <rect x="1" y="3" width="7" height="7" fill="none" stroke="#eee" strokeWidth="2" />
            </svg>
          </div>
          <div className="flex flex-1 items-center justify-center bg-[linear-gradient(#d87c6a,#c0432c_55%,#a03020)]">
            <svg width="13" height="10" viewBox="0 0 13 10">
              <path d="M2 1l9 8M11 1L2 9" stroke="#fff" strokeWidth="2.600" />
            </svg>
          </div>
        </div>
      </div>
      <div className="h-px shrink-0 bg-[#cfcfcf]" />
      <div className="flex h-[23px] shrink-0 items-center bg-[#3a3a3a] pl-[6px] text-[#e4e4e4]">
        {menus.map(([m, w]) => (
          <span key={m} className={w}>
            <u>{m[0]}</u>
            {m.slice(1)}
          </span>
        ))}
      </div>
      <div className="flex h-[1034px] shrink-0 bg-[#454545]">
        <Toolbar />
        <div className="w-[2px] shrink-0" />
        <LeftPanels />
        <div className="w-[2px] shrink-0" />
        <Center />
        <Strip />
        <Properties />
      </div>
      <div className="h-px shrink-0 bg-black" />
      <div className="flex h-px shrink-0 gap-[3px] bg-black pl-[76px]">
        {[0, 1, 2, 3, 4, 5, 6, 7, 8, 9, 10, 11].map((n) => (
          <span key={n} className="h-px w-[134px] bg-[#c8c8c8]" />
        ))}
      </div>
    </div>
  )
}
